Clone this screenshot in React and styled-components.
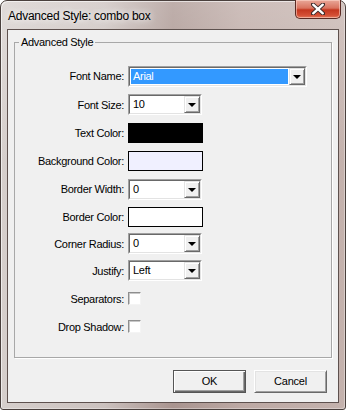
import React from 'react';
import styled, { createGlobalStyle } from 'styled-components';

const GlobalStyle = createGlobalStyle`
  html, body {
    margin: 0;
    padding: 0;
    background: #fff;
  }
  body {
    font-family: "Liberation Sans", Arial, sans-serif;
    width: 346px;
    height: 410px;
    overflow: hidden;
  }
`;

const Window = styled.div`
  width: 346px;
  height: 410px;
  box-sizing: border-box;
  display: flex;
  flex-direction: column;
  padding: 0 6px 6px 6px;
  border: 1px solid #4a403d;
  border-radius: 7px 7px 3px 3px;
  background:
    linear-gradient(to bottom, rgba(255, 255, 255, 0.25), rgba(255, 255, 255, 0) 40%),
    linear-gradient(to right, #d6cfcc 0%, #cbc1be 30%, #a9948f 50%, #bda9a4 70%, #c4b2ad 100%);
  box-shadow: inset 1px 1px 0 rgba(255, 255, 255, 0.6), inset -1px -1px 0 rgba(255, 255, 255, 0.35);
`;

const TitleBar = styled.div`
  height: 28px;
  display: flex;
  align-items: flex-start;
  justify-content: space-between;
`;

const Title = styled.div`
  margin-top: 8px;
  margin-left: 1px;
  font-size: 12px;
  letter-spacing: -0.25px;
  line-height: 14px;
  color: #000;
  text-shadow: 0 0 6px rgba(255, 255, 255, 0.9), 0 0 10px rgba(255, 255, 255, 0.7);
`;

const CloseButton = styled.div`
  width: 46px;
  height: 19px;
  margin-top: -1px;
  margin-right: -2px;
  box-sizing: border-box;
  border: 1px solid #5a2b24;
  border-top: none;
  border-radius: 0 0 5px 5px;
  background: linear-gradient(to bottom, #e9a899 0%, #d9735f 45%, #c4371f 55%, #d44f35 85%, #e07a5c 100%);
  box-shadow: inset 0 0 0 1px rgba(255, 220, 210, 0.55);
  display: flex;
  align-items: center;
  justify-content: center;
`;

const Client = styled.div`
  flex: 1;
  display: flex;
  flex-direction: column;
  background: #f0f0f0;
  border: 1px solid #5e514e;
`;

const Group = styled.fieldset`
  margin: 6px 6px 0 6px;
  padding: 13px 0 16px 0;
  border: 1px solid #a8a8a8;
  box-shadow: 1px 1px 0 #fff;
  min-width: 0;
`;

const Legend = styled.legend`
  margin-left: 4px;
  padding: 0 2px;
  font-size: 11px;
  letter-spacing: -0.3px;
  line-height: 13px;
  color: #000;
`;

const Form = styled.div`
  display: grid;
  grid-template-columns: 109px 1fr;
  grid-template-rows: 28px 29px 28px 28px 28px 27px 27px 27.5px 28px 28px;
  column-gap: 4px;
  align-items: center;
`;

const Label = styled.div`
  text-align: right;
  font-size: 11px;
  letter-spacing: -0.3px;
  color: #000;
  white-space: nowrap;
`;

const Combo = styled.div`
  width: ${p => p.$w}px;
  height: 21px;
  box-sizing: border-box;
  border: 1px solid;
  border-color: #a0a0a0 #fff #fff #a0a0a0;
`;

const Field = styled.div`
  height: 100%;
  box-sizing: border-box;
  border: 1px solid;
  border-color: #696969 #e3e3e3 #e3e3e3 #696969;
  background: #fff;
  display: flex;
`;

const ComboText = styled.div`
  flex: 1;
  margin: 1px;
  padding-left: 2px;
  font-size: 11px;
  letter-spacing: -0.3px;
  line-height: 15px;
  color: ${p => (p.$selected ? '#fff' : '#000')};
  background: ${p => (p.$selected ? '#3399ff' : 'transparent')};
`;

const DropButton = styled.div`
  width: 16px;
  box-sizing: border-box;
  background: #f0f0f0;
  border: 1px solid;
  border-color: #e3e3e3 #696969 #696969 #e3e3e3;
  box-shadow: inset 1px 1px 0 #fff, inset -1px -1px 0 #a0a0a0;
  display: flex;
  align-items: center;
  justify-content: center;
`;

const Arrow = styled.div`
  width: 0;
  height: 0;
  margin-top: 1px;
  border-left: 4px solid transparent;
  border-right: 4px solid transparent;
  border-top: 4px solid #000;
`;

const Swatch = styled.div`
  width: 75px;
  height: 20px;
  box-sizing: border-box;
  border: 1px solid #000;
  background: ${p => p.$color};
`;

const Check = styled.div`
  width: 13px;
  height: 13px;
  box-sizing: border-box;
  border: 1px solid;
  border-color: #8e8e8e #f4f4f4 #f4f4f4 #8e8e8e;
  box-shadow: inset 1px 1px 0 #c8c8c8;
  background: #fff;
`;

const ButtonBar = styled.div`
  display: flex;
  justify-content: flex-end;
  gap: 8px;
  margin-top: 12px;
  padding-right: 11px;
`;

const Button = styled.div`
  width: 73px;
  height: 23px;
  box-sizing: border-box;
  display: flex;
  align-items: center;
  justify-content: center;
  font-size: 11px;
  letter-spacing: -0.2px;
  color: #000;
  background: #f0f0f0;
  border: 1px solid ${p => (p.$default ? '#555' : '#fff')};
  border-right-color: ${p => (p.$default ? '#555' : '#696969')};
  border-bottom-color: ${p => (p.$default ? '#555' : '#696969')};
  box-shadow: ${p =>
    p.$default
      ? 'inset 1px 1px 0 #fff, inset -1px -1px 0 #696969, inset -2px -2px 0 #a0a0a0'
      : 'inset 1px 1px 0 #e3e3e3, inset -1px -1px 0 #a0a0a0'};
`;

const ComboBox = ({ width, value, selected }) => (
  <Combo $w={width}>
    <Field>
      <ComboText $selected={selected}>{value}</ComboText>
      <DropButton>
        <Arrow />
      </DropButton>
    </Field>
  </Combo>
);

const CloseGlyph = () => (
  <svg width="14" height="12" viewBox="0 0 14 12">
    <path
      d="M2 1.5 L12 10.5 M12 1.5 L2 10.5"
      stroke="#3b2a2a"
      strokeWidth="4.2"
      strokeLinecap="round"
    />
    <path
      d="M2.2 1.7 L11.8 10.3 M11.8 1.7 L2.2 10.3"
      stroke="#fff"
      strokeWidth="2.4"
      strokeLinecap="round"
    />
  </svg>
);

const App = () => {
  return (
    <>
      <GlobalStyle />
      <Window>
        <TitleBar>
          <Title>Advanced Style: combo box</Title>
          <CloseButton>
            <CloseGlyph />
          </CloseButton>
        </TitleBar>
        <Client>
          <Group>
            <Legend>Advanced Style</Legend>
            <Form>
              <Label>Font Name:</Label>
              <ComboBox width={179} value="Arial" selected />
              <Label>Font Size:</Label>
              <ComboBox width={74} value="10" />
              <Label>Text Color:</Label>
              <Swatch $color="#000" />
              <Label>Background Color:</Label>
              <Swatch $color="#f0f0ff" />
              <Label>Border Width:</Label>
              <ComboBox width={74} value="0" />
              <Label>Border Color:</Label>
              <Swatch $color="#fff" />
              <Label>Corner Radius:</Label>
              <ComboBox width={74} value="0" />
              <Label>Justify:</Label>
              <ComboBox width={74} value="Left" />
              <Label>Separators:</Label>
              <Check />
              <Label>Drop Shadow:</Label>
              <Check />
            </Form>
          </Group>
          <ButtonBar>
            <Button $default>OK</Button>
            <Button>Cancel</Button>
          </ButtonBar>
        </Client>
      </Window>
    </>
  );
};

export default App;
